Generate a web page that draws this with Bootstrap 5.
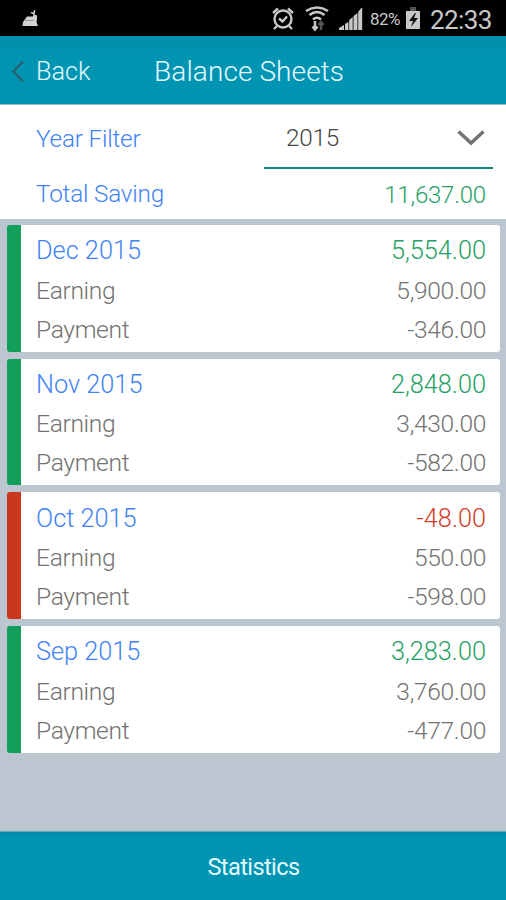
<!DOCTYPE html>
<html lang="en">
<head>
<meta charset="utf-8">
<meta name="viewport" content="width=device-width, initial-scale=1">
<title>Balance Sheets</title>
<link href="https://cdn.jsdelivr.net/npm/bootstrap@5.3.0/dist/css/bootstrap.min.css" rel="stylesheet">
<style>
body{font-family:Roboto,"Liberation Sans",sans-serif;font-weight:300;height:900px;background:#bcc6d1;overflow:hidden;line-height:1}
.status-bar{height:36px;background:#000;color:#c8c8c8;padding-right:15px}
.status-bar svg{display:block;flex:none}
.battery-text{font-size:17px;font-weight:400;margin:2px 3px 0 7px;width:32px;letter-spacing:-.5px}
.clock{font-size:26px;font-weight:400;margin:3px 0 0 9px;width:61px;letter-spacing:-.6px}
.app-header{height:69px;background:linear-gradient(#008da8,#0094b3 30%);border-bottom:1px solid #a3b7c1;color:#e3f9ff;padding-top:3px}
.back-link{width:154px;padding-left:10px;color:inherit;font-size:25.3px;font-weight:inherit}
.page-title{font-size:28px;font-weight:inherit;letter-spacing:.1px}
.filters{height:114px;color:#3f83f6;font-size:24.3px;letter-spacing:-.2px}
.filter-row{height:64px;padding:0 13px 0 36px}
.filter-label{padding-top:4px}
.year-select{width:229px;height:64px;border-bottom:2px solid #178577;color:#444;padding:4px 8px 0 22px}
.total-row{height:50px;padding:1px 20px 0 36px}
.sheets{padding:6px 6px 0 7px;gap:7px}
.sheet{height:126.7px;border:0;border-radius:3px;border-left:14px solid #119f5b;padding:5.500px 14px 0 15px;color:#727272;font-size:24.6px;letter-spacing:-.35px;flex:none}
.sheet.loss{border-left-color:#cb371d}
.sheet-head{height:41px;color:#3f83f6;font-size:25.3px;letter-spacing:0}
.sheet-line{height:39px}
.gain{color:#25a065}
.total-row .gain{font-size:24px}
.deficit{color:#d23d2b}
.app-footer{height:69px;background:linear-gradient(#008da8,#0094b3 10%);color:#e3f9ff;font-size:23.6px;letter-spacing:-.6px;padding:4px 0 0 1px;border:0;border-top:1px solid #6ea5b4}
</style>
</head>
<body class="d-flex flex-column">
<div class="status-bar d-flex align-items-center flex-shrink-0">
  <svg width="40" height="36" viewBox="0 0 40 36"><path d="M34 10l1.500.5-1 4 2.500 1v3.500l-.5 3 1.500 4H22.500l.5-4 3-4 1-1.500h6l.5-2-3-1.500.5-1 2.500.5z" fill="#d2d2d2"/><path d="M25 20.500h9" stroke="#999"/></svg>
  <svg class="ms-auto" width="24" height="26" viewBox="0 0 24 26" fill="none" stroke="#c8c8c8" stroke-width="2.400"><circle cx="12" cy="14" r="8.500"/><path d="M2 8l5-4.500M22 8l-5-4.500M6 21l-3 3M18 21l3 3M8 13.500l3.500 3 4.500-5"/></svg>
  <svg class="ms-2 me-2" width="28" height="28" viewBox="0 0 28 28" fill="none" stroke="#c8c8c8" stroke-width="2.500"><path d="M3 7q11-7 22 0M6.500 11q7.500-6 15 0M10 15.500q4-3.500 8 0"/><path d="M12 26v-9M9.500 22.500l2.500 3 2.500-3" stroke-width="2.500"/><path d="M18 26v-7M15.500 21l2.500-3 2.500 3" stroke="#555"/></svg>
  <svg width="24" height="26" viewBox="2 0 24 26" fill="#c8c8c8"><path d="M2 25v-2l5-3v5zM8 25v-6l3.500-2v8zM12.200 25v-10l3.500-3v13zM16.500 25v-14l4-3v17zM21.200 25v-18l3-4h1v22z"/></svg>
  <span class="battery-text text-nowrap">82%</span>
  <svg width="16" height="26" viewBox="0 0 16 26"><path d="M1 6h14v18H1z" fill="#c8c8c8"/><path d="M5 2h6v4H5z" fill="#555"/><path d="M10 8l-6 8h4l-2 6 7-9H9l2-5z" fill="#111"/></svg>
  <span class="clock text-nowrap">22:33</span>
</div>
<header class="app-header d-flex align-items-center flex-shrink-0">
  <a href="#" class="back-link d-flex align-items-center text-decoration-none"><svg width="14" height="26" viewBox="0 0 14 26" fill="none" stroke="#27636f" stroke-width="2.500"><path d="M13 2.500L3.500 12.500l9.500 10"/></svg><span class="ms-2 ps-1">Back</span></a>
  <h1 class="page-title mb-0">Balance Sheets</h1>
</header>
<section class="filters bg-white flex-shrink-0">
  <div class="filter-row d-flex justify-content-between align-items-center"><span class="filter-label">Year Filter</span>
    <div class="year-select d-flex justify-content-between align-items-center"><span>2015</span><svg width="28" height="18" viewBox="0 0 28 18" fill="none" stroke="#757575" stroke-width="3.500"><path d="M1.500 2.500L14 14 26.500 2.500"/></svg></div>
  </div>
  <div class="total-row d-flex justify-content-between align-items-center"><span>Total Saving</span><span class="gain">11,637.00</span></div>
</section>
<main class="sheets d-flex flex-column flex-grow-1">
  <article class="sheet card"><div class="sheet-head d-flex justify-content-between align-items-center"><span>Dec 2015</span><span class="gain">5,554.00</span></div><div class="sheet-line d-flex justify-content-between align-items-center"><span>Earning</span><span>5,900.00</span></div><div class="sheet-line d-flex justify-content-between align-items-center"><span>Payment</span><span>-346.00</span></div></article>
  <article class="sheet card"><div class="sheet-head d-flex justify-content-between align-items-center"><span>Nov 2015</span><span class="gain">2,848.00</span></div><div class="sheet-line d-flex justify-content-between align-items-center"><span>Earning</span><span>3,430.00</span></div><div class="sheet-line d-flex justify-content-between align-items-center"><span>Payment</span><span>-582.00</span></div></article>
  <article class="sheet loss card"><div class="sheet-head d-flex justify-content-between align-items-center"><span>Oct 2015</span><span class="deficit">-48.00</span></div><div class="sheet-line d-flex justify-content-between align-items-center"><span>Earning</span><span>550.00</span></div><div class="sheet-line d-flex justify-content-between align-items-center"><span>Payment</span><span>-598.00</span></div></article>
  <article class="sheet card"><div class="sheet-head d-flex justify-content-between align-items-center"><span>Sep 2015</span><span class="gain">3,283.00</span></div><div class="sheet-line d-flex justify-content-between align-items-center"><span>Earning</span><span>3,760.00</span></div><div class="sheet-line d-flex justify-content-between align-items-center"><span>Payment</span><span>-477.00</span></div></article>
</main>
<button type="button" class="app-footer w-100 flex-shrink-0">Statistics</button>
<script src="https://cdn.jsdelivr.net/npm/bootstrap@5.3.0/dist/js/bootstrap.bundle.min.js"></script>
</body>
</html>
